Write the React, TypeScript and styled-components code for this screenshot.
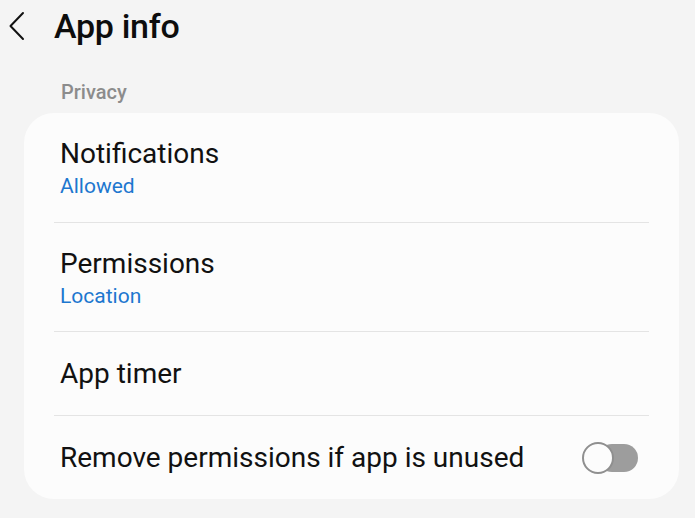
import React, { useState } from "react";
import styled, { createGlobalStyle } from "styled-components";

const GlobalStyle = createGlobalStyle`
  html, body {
    margin: 0;
    padding: 0;
    background: #f4f4f4;
  }
  body {
    font-family: Roboto, "Noto Sans", sans-serif;
    color: #111;
  }
`;

const Page = styled.div`
  width: 695px;
  height: 518px;
  overflow: hidden;
  display: flex;
  flex-direction: column;
`;

const Header = styled.div`
  display: flex;
  align-items: center;
  height: 52px;
  padding-left: 8px;
  gap: 28px;
`;

const BackButton = styled.button`
  display: flex;
  align-items: center;
  justify-content: center;
  width: 18px;
  height: 32px;
  padding: 0;
  border: 0;
  background: none;
  cursor: pointer;
`;

const Title = styled.h1`
  margin: 0;
  font-size: 34px;
  font-weight: 500;
  letter-spacing: -0.3px;
  color: #0d0d0d;
`;

const SectionLabel = styled.div`
  padding: 28px 0 0 61px;
  height: 33px;
  font-size: 20px;
  font-weight: 500;
  color: #8c8c8c;
`;

const Card = styled.div`
  margin: 0 16px 0 24px;
  background: #fcfcfc;
  border-radius: 30px;
  padding: 0 30px;
`;

const Row = styled.div<{ $tall?: boolean }>`
  box-sizing: border-box;
  display: flex;
  align-items: center;
  justify-content: space-between;
  height: ${({ $tall }) => ($tall ? "109px" : "84px")};
  padding-left: 6px;
  & + & {
    border-top: 1px solid #e4e4e4;
  }
`;

const TextBlock = styled.div`
  display: flex;
  flex-direction: column;
  gap: 4px;
`;

const PrimaryText = styled.div`
  font-size: 28px;
  font-weight: 400;
  color: #111;
`;

const SecondaryText = styled.div`
  font-size: 21px;
  color: #1d77cf;
`;

const SwitchTrack = styled.button<{ $on: boolean }>`
  position: relative;
  width: 56px;
  height: 32px;
  margin-right: 11px;
  padding: 0;
  border: 0;
  background: none;
  cursor: pointer;

  &::before {
    content: "";
    position: absolute;
    left: 16px;
    right: 0;
    top: 2px;
    height: 28px;
    border-radius: 14px;
    background: ${({ $on }) => ($on ? "#3e91ff" : "#9d9d9d")};
  }
`;

const SwitchKnob = styled.span<{ $on: boolean }>`
  position: absolute;
  top: 0;
  left: ${({ $on }) => ($on ? "24px" : "0")};
  width: 32px;
  height: 32px;
  box-sizing: border-box;
  border-radius: 50%;
  background: #fcfcfc;
  border: 2px solid #8f8f8f;
`;

const rows = [
  { title: "Notifications", sub: "Allowed" },
  { title: "Permissions", sub: "Location" },
  { title: "App timer" },
];

export default function App() {
  const [unusedOn, setUnusedOn] = useState(false);

  return (
    <Page>
      <GlobalStyle />
      <Header>
        <BackButton aria-label="Back">
          <svg width="18" height="30" viewBox="0 0 18 30" fill="none">
            <path d="M15 2 L2.5 15 L15 28" stroke="#111" strokeWidth="2" strokeLinecap="round" strokeLinejoin="round" />
          </svg>
        </BackButton>
        <Title>App info</Title>
      </Header>
      <SectionLabel>Privacy</SectionLabel>
      <Card>
        {rows.map((r) => (
          <Row key={r.title} $tall={!!r.sub}>
            <TextBlock>
              <PrimaryText>{r.title}</PrimaryText>
              {r.sub && <SecondaryText>{r.sub}</SecondaryText>}
            </TextBlock>
          </Row>
        ))}
        <Row>
          <PrimaryText>Remove permissions if app is unused</PrimaryText>
          <SwitchTrack $on={unusedOn} onClick={() => setUnusedOn(!unusedOn)} aria-label="Remove permissions if app is unused">
            <SwitchKnob $on={unusedOn} />
          </SwitchTrack>
        </Row>
      </Card>
    </Page>
  );
}
